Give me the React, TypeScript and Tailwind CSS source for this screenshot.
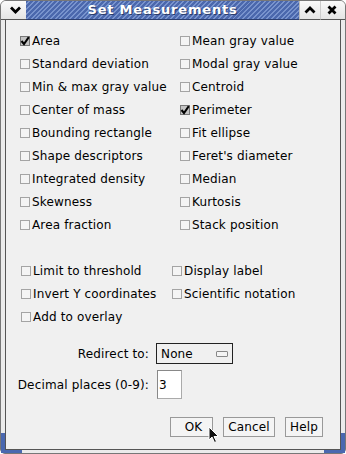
import React from "react";

function Box({ checked }: { checked?: boolean }) {
  return (
    <span
      className={
        "relative inline-block w-[10px] h-[10px] border shrink-0 " +
        (checked ? "border-[#777] bg-[#c4c4c4]" : "border-[#a4a4a4] bg-[#f4f4f4]")
      }
    >
      {checked && (
        <svg viewBox="0 0 10 10" className="absolute left-[-1px] top-[-1px] w-[10px] h-[10px]">
          <path d="M1.5 5 L4 8 L8.8 1.2" stroke="#000" strokeWidth="2" fill="none" />
        </svg>
      )}
    </span>
  );
}

function Check({ label, checked }: { label: string; checked?: boolean }) {
  return (
    <div className="flex items-center h-[23px] gap-[2px] whitespace-nowrap">
      <Box checked={checked} />
      <span>{label}</span>
    </div>
  );
}

const left = [
  ["Area", true],
  ["Standard deviation", false],
  ["Min & max gray value", false],
  ["Center of mass", false],
  ["Bounding rectangle", false],
  ["Shape descriptors", false],
  ["Integrated density", false],
  ["Skewness", false],
  ["Area fraction", false],
] as const;
const right = [
  ["Mean gray value", false],
  ["Modal gray value", false],
  ["Centroid", false],
  ["Perimeter", true],
  ["Fit ellipse", false],
  ["Feret's diameter", false],
  ["Median", false],
  ["Kurtosis", false],
  ["Stack position", false],
] as const;

function TitleBtn({ children, w }: { children: React.ReactNode; w: string }) {
  return (
    <div
      className={
        w +
        " h-full flex items-center justify-center bg-[linear-gradient(#fafafa,#e4e4e4)] border-b border-[#555]"
      }
    >
      {children}
    </div>
  );
}

export default function App() {
  return (
    <div className="w-[346px] h-[454px] bg-white font-['DejaVu_Sans',sans-serif] text-[12px] tracking-[0.15px] text-black relative">
      <div className="w-full h-full flex flex-col rounded-t-[6px] rounded-b-[5px] border border-[#777] overflow-hidden bg-[#e6e6e6]">
        {/* title bar */}
        <div className="h-[19px] flex shrink-0">
          <TitleBtn w="w-[25px] pl-[4px]">
            <svg viewBox="0 0 12 8" className="w-[13px] h-[8px]">
              <path d="M1.5 1.5 L6 6 L10.5 1.5" stroke="#000" strokeWidth="2.8" fill="none" />
            </svg>
          </TitleBtn>
          <div className="flex-1 h-full flex items-center justify-center border-b border-[#2c3f70] bg-[repeating-linear-gradient(135deg,#4b68ad_0px,#4b68ad_2px,#7893cd_2px,#7893cd_3.4px)]">
            <span className="font-bold text-[13px] text-white tracking-[0.8px] [text-shadow:1px_1px_0_#2a3c6a] mt-[-1px]">
              Set Measurements
            </span>
          </div>
          <TitleBtn w="w-[21px] border-l border-l-[#bbb]">
            <svg viewBox="0 0 12 8" className="w-[12px] h-[8px]">
              <path d="M1.5 6.5 L6 2 L10.5 6.5" stroke="#000" strokeWidth="2.8" fill="none" />
            </svg>
          </TitleBtn>
          <TitleBtn w="w-[22px] border-l border-l-[#ccc]">
            <svg viewBox="0 0 10 10" className="w-[10px] h-[10px]">
              <path d="M1.5 1.5 L8.5 8.5 M8.5 1.5 L1.5 8.5" stroke="#000" strokeWidth="2.8" fill="none" />
            </svg>
          </TitleBtn>
          <div className="w-[3px] h-full bg-[linear-gradient(#fafafa,#e4e4e4)] border-b border-[#555]" />
        </div>
        {/* body */}
        <div className="flex-1 flex min-h-0">
          <div className="w-[4px] bg-[#ebebeb]" />
          <div className="flex-1 border-l border-r border-b border-[#555] bg-[#f0f0f0] flex flex-col">
            <div className="flex pt-[9px] pl-[14px]">
              <div className="w-[160px] flex flex-col">
                {left.map(([l, c]) => (
                  <Check key={l} label={l} checked={c} />
                ))}
              </div>
              <div className="flex flex-col">
                {right.map(([l, c]) => (
                  <Check key={l} label={l} checked={c} />
                ))}
              </div>
            </div>
            <div className="flex pt-[23px] pl-[15px]">
              <div className="w-[151px] flex flex-col">
                <Check label="Limit to threshold" />
                <Check label="Invert Y coordinates" />
                <Check label="Add to overlay" />
              </div>
              <div className="flex flex-col">
                <Check label="Display label" />
                <Check label="Scientific notation" />
              </div>
            </div>
            <div className="flex items-center mt-[15px] h-[21px]">
              <div className="w-[144px] text-right pr-[1px]">Redirect to:</div>
              <div className="ml-[6px] w-[77px] h-[21px] border border-[#222] bg-[#f0f0f0] flex items-center pl-[4px] pr-[4px]">
                <span className="flex-1">None</span>
                <span className="w-[12px] h-[6px] border border-[#888] rounded-[1px] bg-[#f4f4f4]" />
              </div>
            </div>
            <div className="flex items-center mt-[6px] h-[29px]">
              <div className="w-[144px] text-right pr-[1px]">Decimal places (0-9):</div>
              <div className="ml-[7px] w-[25px] h-[29px] border border-[#aaa] border-t-[#888] border-l-[#888] bg-white flex items-center pl-[1px]">
                3
              </div>
            </div>
            <div className="flex justify-end mt-[18px] pr-[17px] gap-[10px]">
              <div className="w-[43px] h-[20px] border border-[#999] bg-[#f4f4f4] flex items-center justify-center pl-[4px]">
                OK
              </div>
              <div className="w-[52px] h-[20px] border border-[#999] bg-[#f4f4f4] flex items-center justify-center">
                Cancel
              </div>
              <div className="w-[38px] h-[20px] border border-[#999] bg-[#f4f4f4] flex items-center justify-center">
                Help
              </div>
            </div>
          </div>
          <div className="w-[4px] bg-[#ebebeb]" />
        </div>
        <div className="h-[3px] bg-[#ebebeb] shrink-0" />
      </div>
      {/* blue corner accents */}
      <div className="absolute left-[1px] bottom-[1px] w-[4px] h-[20px] bg-[#4a68b0]" />
      <div className="absolute left-[1px] bottom-[1px] w-[21px] h-[3px] bg-[#4a68b0]" />
      <div className="absolute right-[1px] bottom-[1px] w-[4px] h-[20px] bg-[#4a68b0]" />
      <div className="absolute right-[1px] bottom-[1px] w-[21px] h-[3px] bg-[#4a68b0]" />
      {/* mouse cursor */}
      <svg viewBox="0 0 12 18" className="absolute left-[208px] top-[426px] w-[12px] h-[18px]">
        <path d="M1 1 L1 14 L4 11 L6.5 16.5 L8.5 15.5 L6 10.5 L10.5 10.5 Z" fill="#111" stroke="#fff" strokeWidth="1" />
      </svg>
    </div>
  );
}
